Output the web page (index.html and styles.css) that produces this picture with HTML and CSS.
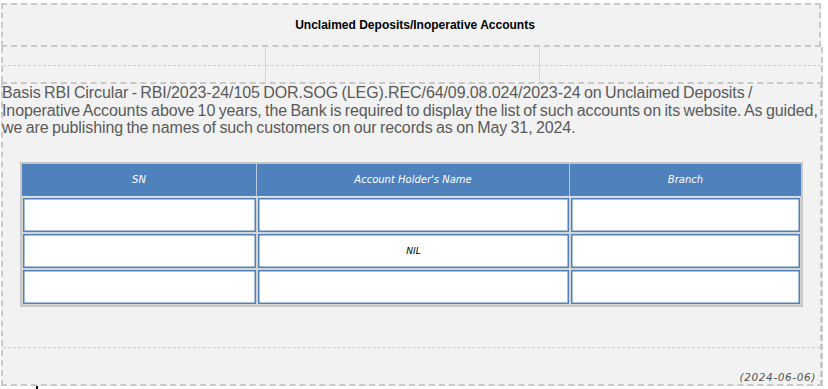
FILE: index.html
```html
<!DOCTYPE html>
<html lang="en">
<head>
<meta charset="utf-8">
<title>Unclaimed Deposits/Inoperative Accounts</title>
<link rel="stylesheet" href="styles.css">
</head>
<body>
<div class="sheet">
  <div class="title-box">
    <h1 class="title">Unclaimed Deposits/Inoperative Accounts</h1>
  </div>
  <div class="spacer-grid">
    <div class="cell"></div><div class="cell"></div><div class="cell last"></div>
    <div class="cell bottom"></div><div class="cell bottom"></div><div class="cell bottom last"></div>
  </div>
  <div class="content-box">
    <p class="notice">Basis RBI Circular - RBI/2023-24/105 DOR.SOG (LEG).REC/64/09.08.024/2023-24 on Unclaimed Deposits / Inoperative Accounts above 10 years, the Bank is required to display the list of such accounts on its website. As guided, we are publishing the names of such customers on our records as on May 31, 2024.</p>
    <div class="table-wrap">
      <table class="accounts">
        <thead>
          <tr>
            <th class="col-sn">SN</th>
            <th class="col-name">Account Holder's Name</th>
            <th class="col-branch">Branch</th>
          </tr>
        </thead>
        <tbody>
          <tr><td></td><td></td><td></td></tr>
          <tr><td></td><td class="nil">NIL</td><td></td></tr>
          <tr><td></td><td></td><td></td></tr>
        </tbody>
      </table>
    </div>
    <div class="footer-row">
      <span class="date">(2024-06-06)</span>
    </div>
  </div>
  <span class="caret"></span>
</div>
</body>
</html>
```
FILE: styles.css
```css
html, body {
  margin: 0;
  padding: 0;
  background: #ffffff;
}

.sheet {
  width: 822px;
  margin: 3px 0 0 1px;
  font-family: "Liberation Sans", Arial, sans-serif;
}

/* heading block */
.title-box {
  height: 40px;
  width: 816px;
  background: #f2f2f2;
  border: 2px dashed #c9c9c9;
  display: flex;
  align-items: center;
  justify-content: center;
}

.title {
  margin: 0;
  font-size: 12px;
  font-weight: bold;
  color: #000;
  position: relative;
  left: 4px;
}

/* empty layout rows below the heading */
.spacer-grid {
  display: grid;
  grid-template-columns: 263px 274px 281px;
  grid-template-rows: 19px 16px;
  width: 818px;
  background: #f2f2f2;
  border-left: 2px dashed #c9c9c9;
  border-right: 2px dashed #c9c9c9;
}

.spacer-grid .cell {
  border-right: 1px solid #d6d6d6;
  border-bottom: 1px dashed #cfcfcf;
}

.spacer-grid .cell.bottom {
  border-bottom: none;
}

.spacer-grid .cell.last {
  border-right: none;
}

/* main content block */
.content-box {
  width: 817px;
  height: 300px;
  background: #f2f2f2;
  border: 2px dashed #c9c9c9;
  border-right-width: 3px;
  display: flex;
  flex-direction: column;
}

.notice {
  margin: 0 -4px 0 -1px;
  font-size: 16px;
  line-height: 17.6px;
  letter-spacing: -0.1px;
  word-spacing: -0.9px;
  color: #5a5a5a;
}

.table-wrap {
  padding: 25px 0 0 17px;
}

.accounts {
  width: 783px;
  border: 2px solid #c8c8c8;
  border-collapse: separate;
  border-spacing: 0;
  background: #d4d4d4;
  table-layout: fixed;
}

.accounts th {
  height: 32px;
  padding: 0;
  background: #4f81bd;
  color: #ffffff;
  font-family: "DejaVu Sans", sans-serif;
  font-style: italic;
  font-weight: normal;
  font-size: 10px;
  text-align: center;
  border-right: 1px solid #b8c9de;
  border-bottom: 1px solid #e3e3e3;
}

.accounts th.col-branch {
  border-right: none;
}

.accounts .col-sn { width: 234px; }
.accounts .col-name { width: 312px; }

/* white cells: grey gutter outside, blue frame inside */
.accounts td {
  height: 34px;
  padding: 0;
  background: #ffffff;
  border: 1px solid #d4d4d4;
  box-shadow: inset 0 0 0 1.5px #4f81bd;
  text-align: center;
  font-family: "DejaVu Sans", sans-serif;
  font-style: italic;
  font-size: 9px;
  color: #000;
}

.footer-row {
  margin-top: auto;
  height: 36px;
  border-top: 1px dashed #cfcfcf;
  display: flex;
  align-items: flex-end;
  justify-content: flex-end;
  padding-right: 4px;
}

.date {
  font-family: "DejaVu Sans", sans-serif;
  font-style: italic;
  font-size: 10.5px;
  color: #555;
  letter-spacing: 0.6px;
  line-height: 14px;
}

.caret {
  display: block;
  width: 2px;
  height: 6px;
  margin-left: 35px;
  background: #000;
}
```
